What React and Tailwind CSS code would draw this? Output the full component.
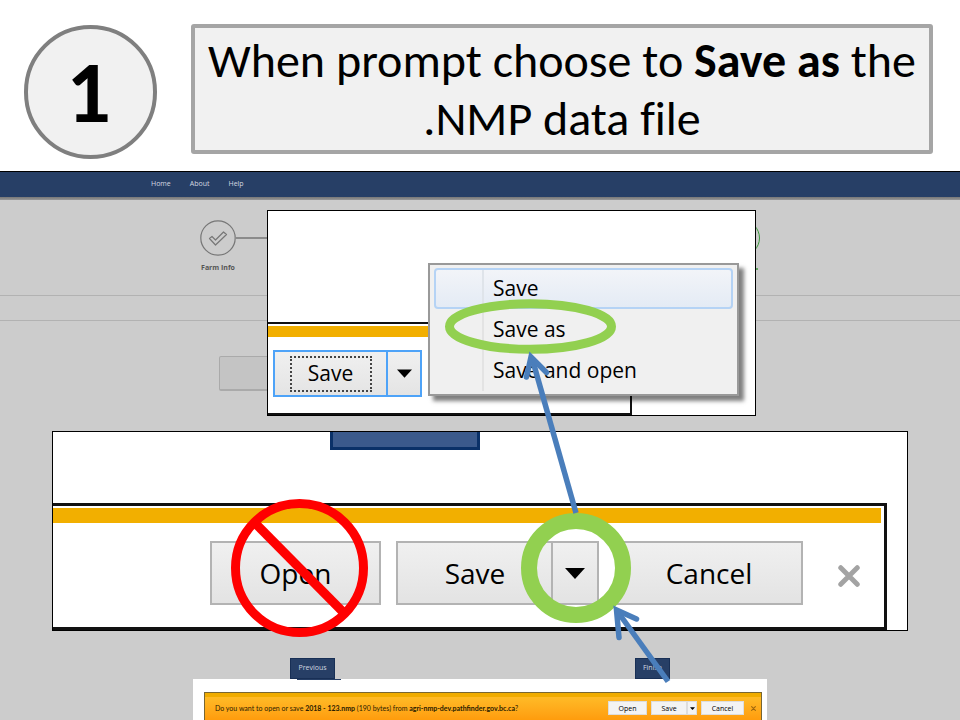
import React from "react";

function Caret({ className }) {
  return (
    <svg viewBox="0 0 20 11" className={className} aria-hidden="true">
      <path d="M0 0H20L10 11Z" fill="#000" />
    </svg>
  );
}

function Cross({ className, stroke }) {
  return (
    <svg viewBox="0 0 20 20" className={className} aria-hidden="true">
      <path d="M2.500 2.500L17.500 17.500M17.500 2.500L2.500 17.500" stroke={stroke} strokeWidth="4.500" fill="none" strokeLinecap="round" />
    </svg>
  );
}

function SlideHeader() {
  return (
    <header className="flex items-start pt-6 pr-[27px] pb-3 pl-6 font-[Carlito,Calibri,Lato,sans-serif]">
      <div className="mt-px mr-[34px] flex h-[134px] w-[133px] shrink-0 items-center justify-center rounded-full border-4 border-[#7f7f7f] bg-[#f1f1f1]">
        <span className="pr-1 text-[88px] leading-none font-bold">1</span>
      </div>
      <h1 className="flex-1 rounded-[3px] border-4 border-[#a5a5a5] bg-[#f1f1f1] pt-1 pb-[2px] text-center text-[48px] leading-[58px] [font-variant-ligatures:none]">
        When prompt choose to <b>Save as</b> the
        <br />
        .NMP data file
      </h1>
    </header>
  );
}

function DimmedPage() {
  return (
    <div className="col-start-1 row-start-1 min-w-0 bg-[#ccc]">
      <nav className="flex h-[26px] items-center gap-[19px] border-t border-black bg-[#273f66] pl-[151px] text-[7px] text-[#d4d8e0]">
        <a href="#home">Home</a>
        <a href="#about">About</a>
        <a href="#help">Help</a>
      </nav>
      <div className="h-[3px] bg-gradient-to-b from-[#777] to-[#999]" />
      <div className="flex h-24 items-start border-b border-[#b2b2b2] pt-5 pl-[200px]">
        <div className="flex w-9 flex-col items-center">
          <svg viewBox="0 0 36 36" className="h-9 w-9" fill="none" aria-hidden="true">
            <circle cx="18" cy="18" r="17.2" stroke="#777" strokeWidth="1.2" />
            <path
              d="M9.5 18.5L12 16.5L15.5 20L23.5 12L26.5 14.5L15.5 25Z"
              stroke="#777"
              strokeWidth="1.2"
              strokeLinejoin="round"
            />
          </svg>
          <span className="mt-[7px] text-[7px] leading-[10px] font-bold whitespace-nowrap text-[#555]">Farm Info</span>
        </div>
        <div className="mt-[17px] h-[2px] w-[488px] bg-[#8b8b8b]" />
        <div className="flex w-9 flex-col items-center">
          <div className="h-9 w-9 rounded-full border border-[#3c9a3c]" />
          <span className="mt-3 mr-[2px] h-[2px] w-[2px] self-end rounded-full bg-[#3c9a3c]" />
        </div>
      </div>
      <div className="h-[25px] border-b border-[#b2b2b2]" />
      <div className="mt-[35px] ml-[219px] h-[35px] w-[520px] rounded-[2px] border border-b-2 border-[#aaa] bg-[#c4c4c4]" />
    </div>
  );
}

function SaveMenuPanel() {
  return (
    <section className="relative ml-[267px] flex h-[206px] w-[489px] flex-col justify-end border border-black bg-white">
      <div className="h-[93px] w-[364px] border-t-2 border-r-2 border-b-2 border-[#111] pt-[2px]">
        <div className="h-[11px] bg-[#f2af00]" />
        <div className="mt-[13px] ml-[5px] flex h-[47px] w-[149px] border-2 border-[#4ea3f8] bg-gradient-to-b from-[#f0f0f0] to-[#e4e4e4]">
          <button className="flex flex-1 items-center justify-center border-r-2 border-[#4ea3f8]">
            <span className="flex h-9 w-[82px] items-center justify-center border-2 border-dotted border-[#444] text-[21px] leading-none">
              Save
            </span>
          </button>
          <button aria-label="More save options" className="flex w-8 items-center justify-center">
            <Caret className="h-[9px] w-[15px]" />
          </button>
        </div>
      </div>
      <div
        role="menu"
        className="absolute top-[52px] left-[160px] flex w-[311px] flex-col border-2 border-[#999] bg-[#f0f0f0] p-1 pt-[3px] pb-[3px] text-[21px] leading-none shadow-[5px_5px_4px_rgba(0,0,0,0.5)]"
      >
        <button
          role="menuitem"
          className="flex h-[41px] items-stretch rounded-[4px] border-2 border-[#b5d3f5] bg-gradient-to-b from-[#f2f4f8] to-[#e4ebf5]"
        >
          <span className="w-12 border-r-2 border-[#dfe4ea]" />
          <span className="self-center pl-[9px]">Save</span>
        </button>
        <button role="menuitem" className="flex h-[41px] items-stretch pl-[2px]">
          <span className="w-12 border-r-2 border-[#e3e3e3]" />
          <span className="self-center pl-[9px]">Save as</span>
        </button>
        <button role="menuitem" className="flex h-[41px] items-stretch pl-[2px]">
          <span className="w-12 border-r-2 border-[#e3e3e3]" />
          <span className="self-center pl-[9px]">Save and open</span>
        </button>
      </div>
    </section>
  );
}

function DownloadPromptPanel() {
  const face = "flex items-center justify-center border-[#b3b3b3] bg-gradient-to-b from-[#f0f0f0] to-[#e3e3e3]";
  return (
    <section className="mt-[15px] ml-[52px] flex h-[200px] w-[856px] flex-col justify-between border border-black bg-white">
      <div className="ml-[277px] h-[18px] w-[150px] border-x-[3px] border-b-[3px] border-[#0a3168] bg-[#3b5a8c]" />
      <div className="h-[127px] w-[834px] border-t-[3px] border-r-[3px] border-b-[3px] border-[#111] pt-[2px]">
        <div className="mr-[3px] h-[15px] bg-[#f2af00]" />
        <div className="mt-[18px] flex h-16 items-center pl-[157px] text-[28px] leading-none">
          <button className={face + " h-16 w-[171px] border-2"}>Open</button>
          <button className={face + " ml-[15px] h-16 w-[158px] border-2"}>Save</button>
          <button aria-label="More save options" className={face + " -ml-[3px] h-16 w-[48px] border-2"}>
            <Caret className="h-[11px] w-5" />
          </button>
          <button className={face + " ml-4 h-16 w-[188px] border-2"}>Cancel</button>
          <button aria-label="Close" className="mt-[6px] ml-[35px]">
            <Cross className="h-[22px] w-[22px]" stroke="#a3a3a3" />
          </button>
        </div>
      </div>
    </section>
  );
}

function WizardButtons() {
  return (
    <div className="mt-[27px] flex h-[21px] gap-[300px] pl-[290px] text-[7px] text-[#d4d8e0]">
      <button className="w-[45px] border border-[#182f55] bg-[#273f66]">Previous</button>
      <button className="w-[35px] border border-[#182f55] bg-[#273f66]">Finish</button>
    </div>
  );
}

function DownloadBar() {
  const face = "flex h-[14px] items-center justify-center border border-[#ddd] bg-[#f3f3f3]";
  return (
    <div className="ml-[193px] flex w-[574px] flex-1 flex-col bg-white pr-[5px] pl-[11px]">
      <div className="ml-[93px] h-px w-[44px] bg-[#273f66]" />
      <div className="mt-3 flex flex-1 flex-col border-x border-t border-[#776633] bg-gradient-to-b from-[#ffc02a] to-[#ff9c0c]">
        <div className="h-1 bg-[#f0ac00]" />
        <div className="flex items-center pt-1 pr-[5px] pl-[10px] text-[7px] leading-none whitespace-nowrap">
          <p className="flex-1 font-[Lato,sans-serif] text-[#2a1c00]">
            Do you want to open or save <b>2018 - 123.nmp</b> (190 bytes) from <b>agri-nmp-dev.pathfinder.gov.bc.ca</b>?
          </p>
          <button className={face + " w-[39px]"}>Open</button>
          <button className={face + " ml-1 w-9"}>Save</button>
          <button aria-label="More save options" className={face + " w-[10px]"}>
            <Caret className="h-[3px] w-[5px]" />
          </button>
          <button className={face + " ml-1 w-[43px]"}>Cancel</button>
          <button aria-label="Close" className="ml-[7px]">
            <Cross className="h-[5px] w-[5px]" stroke="#a0690e" />
          </button>
        </div>
      </div>
    </div>
  );
}

function Annotations() {
  return (
    <svg
      viewBox="0 171 960 549"
      className="pointer-events-none absolute top-0 left-0 h-[549px] w-[960px]"
      fill="none"
      aria-hidden="true"
    >
      <ellipse cx="530.5" cy="326.5" rx="81" ry="22.8" stroke="#92d050" strokeWidth="9" />
      <circle cx="576" cy="568" r="47" stroke="#92d050" strokeWidth="16" />
      <ellipse cx="299.5" cy="568" rx="64" ry="64.5" stroke="#f00" strokeWidth="9" />
      <path d="M255 523L344 613" stroke="#f00" strokeWidth="9" />
      <g stroke="#4a7ebb" strokeWidth="5.5" strokeLinejoin="miter" strokeMiterlimit="8">
        <path d="M576 513L532 358" />
        <path d="M526.5 377L531 357L546.5 372.5" strokeLinecap="round" />
        <path d="M668 681.500L617.500 611.500" />
        <path d="M619 637.500L616.500 610L636.500 619" strokeLinecap="round" />
      </g>
    </svg>
  );
}

export default function App() {
  return (
    <div className="flex min-h-screen flex-col bg-white font-['Open_Sans','Noto_Sans',sans-serif] text-black">
      <SlideHeader />
      <main className="relative grid flex-1 overflow-hidden">
        <DimmedPage />
        <div className="relative col-start-1 row-start-1 flex min-w-0 flex-col pt-[39px]">
          <SaveMenuPanel />
          <DownloadPromptPanel />
          <WizardButtons />
          <DownloadBar />
        </div>
        <Annotations />
      </main>
    </div>
  );
}
